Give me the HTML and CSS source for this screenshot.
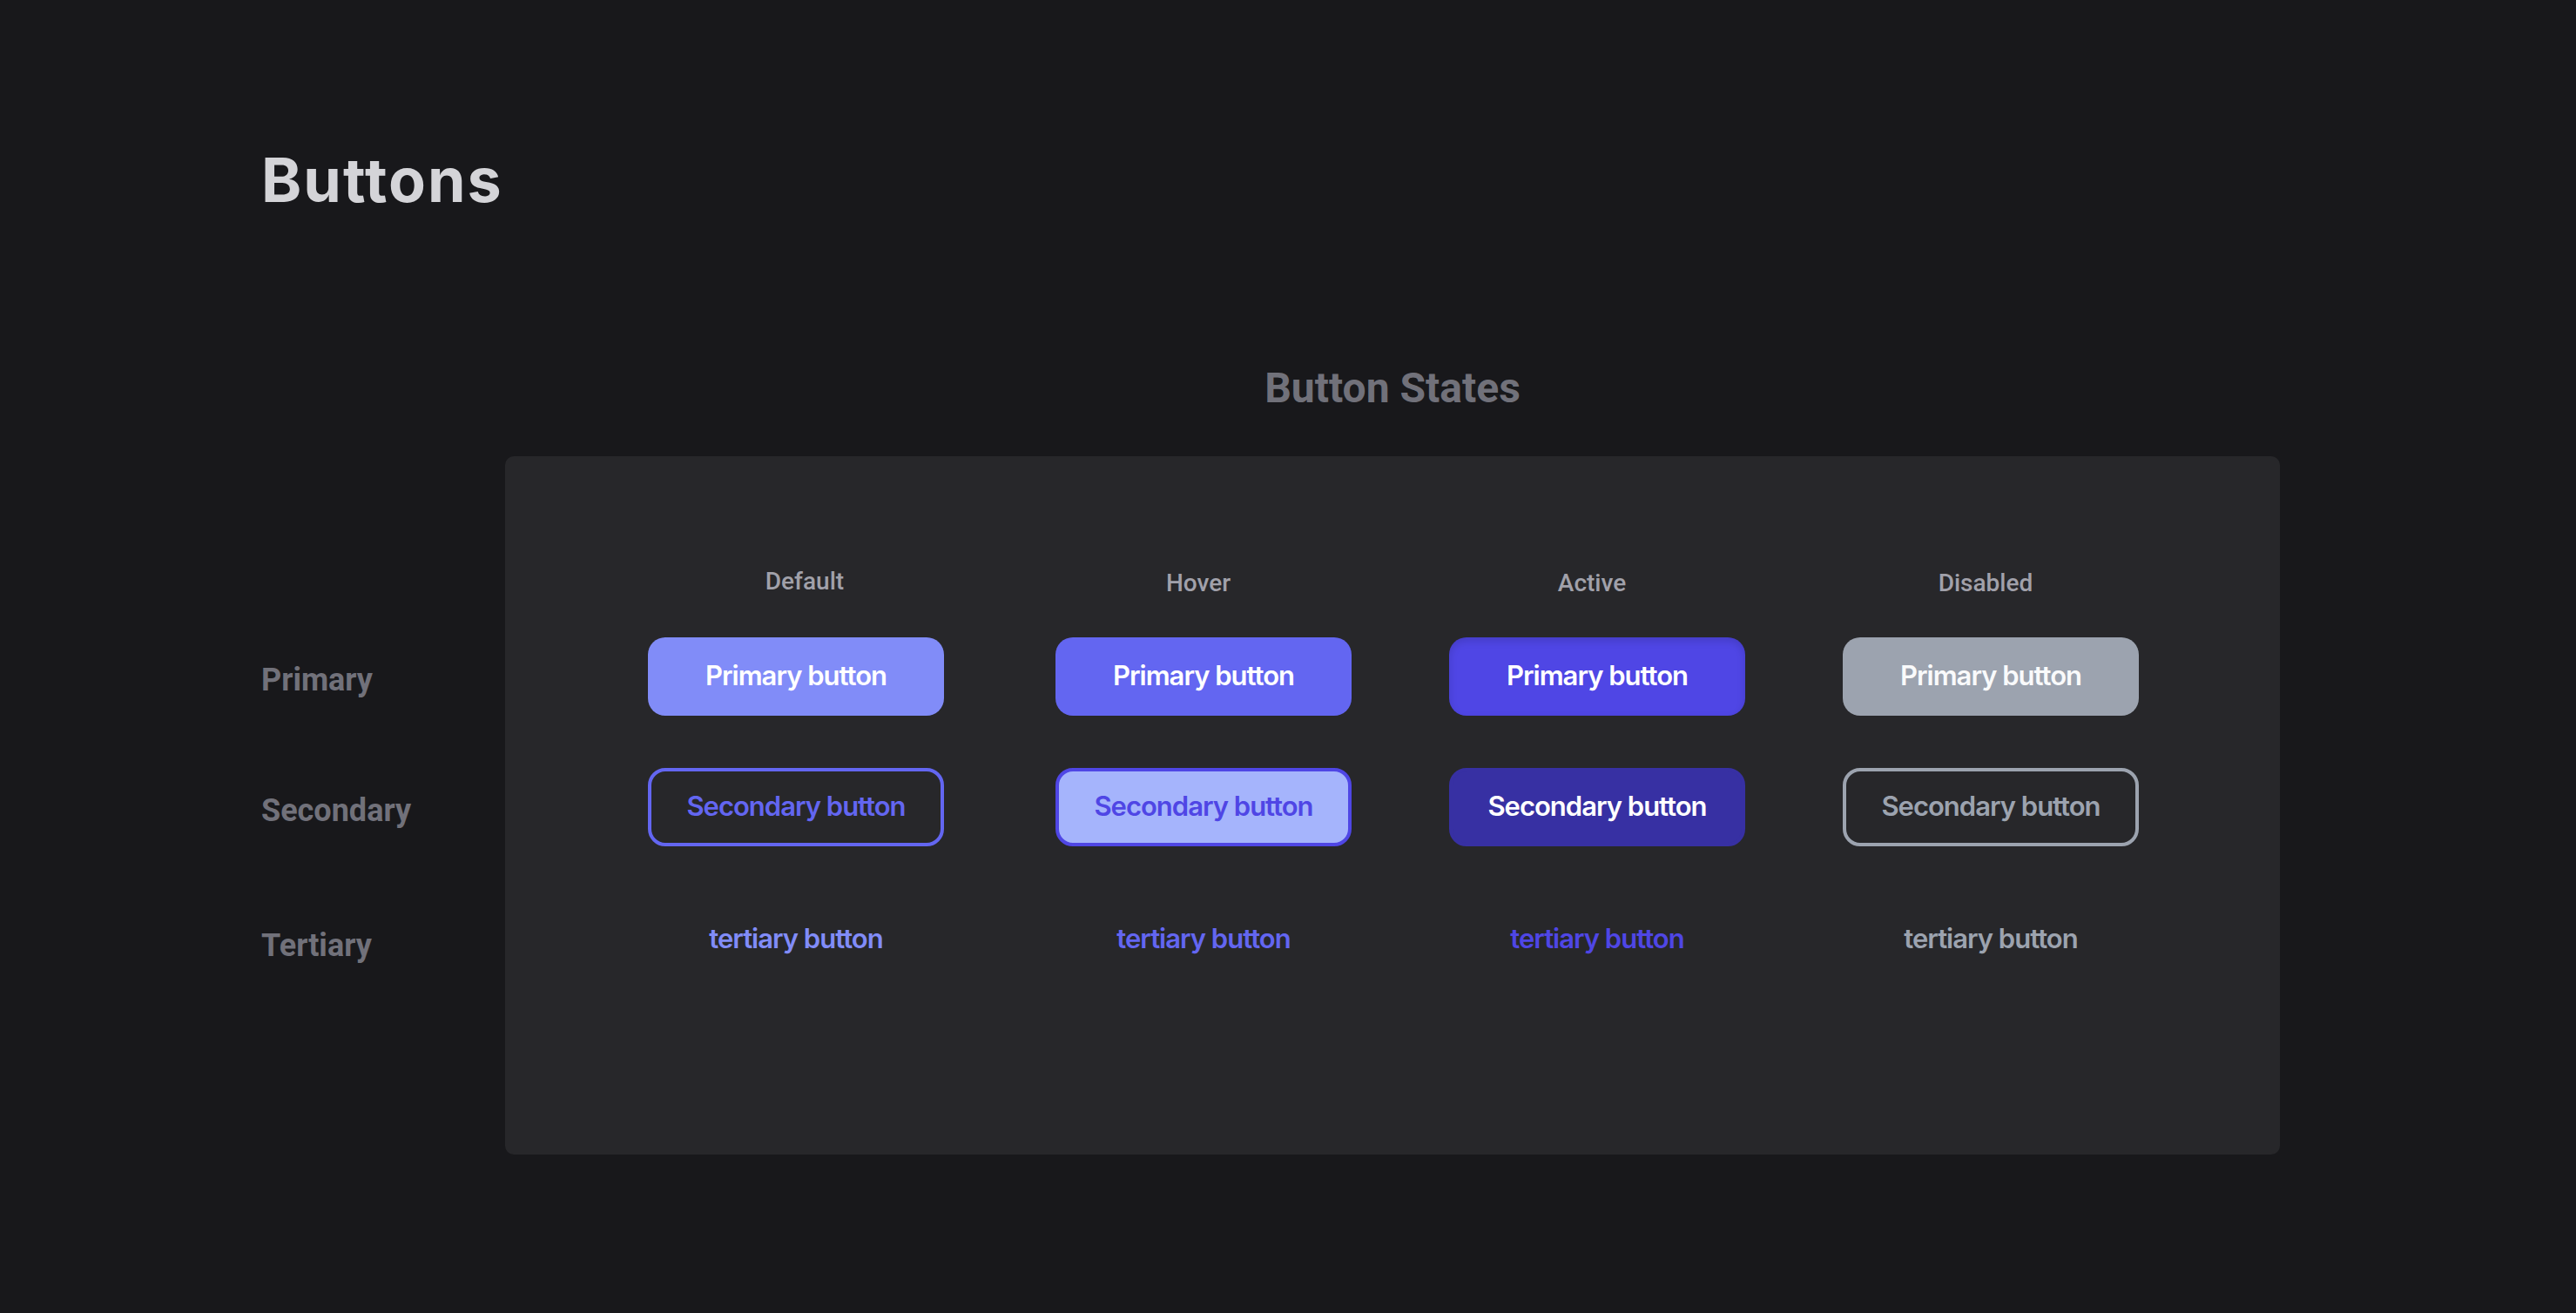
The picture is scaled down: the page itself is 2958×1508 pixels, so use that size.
FILE: index.html
```html
<!DOCTYPE html>
<html lang="en">
<head>
<meta charset="utf-8">
<title>Buttons</title>
<link rel="stylesheet" href="styles.css">
</head>
<body>
<main class="page">
  <h1 class="page-title">Buttons</h1>

  <section class="states">
    <h2 class="states-title">Button States</h2>

    <div class="row-labels">
      <div class="row-label">Primary</div>
      <div class="row-label">Secondary</div>
      <div class="row-label row-label--tertiary">Tertiary</div>
    </div>

    <div class="card">
      <div class="state-heads">
        <div class="state-head state-head--first">Default</div>
        <div class="state-head">Hover</div>
        <div class="state-head">Active</div>
        <div class="state-head">Disabled</div>
      </div>

      <div class="btn-grid">
        <button class="btn btn-primary">Primary button</button>
        <button class="btn btn-primary is-hover">Primary button</button>
        <button class="btn btn-primary is-active">Primary button</button>
        <button class="btn btn-primary is-disabled">Primary button</button>

        <button class="btn btn-secondary">Secondary button</button>
        <button class="btn btn-secondary is-hover">Secondary button</button>
        <button class="btn btn-secondary is-active">Secondary button</button>
        <button class="btn btn-secondary is-disabled">Secondary button</button>

        <button class="btn btn-tertiary">tertiary button</button>
        <button class="btn btn-tertiary is-hover">tertiary button</button>
        <button class="btn btn-tertiary is-active">tertiary button</button>
        <button class="btn btn-tertiary is-disabled">tertiary button</button>
      </div>
    </div>
  </section>
</main>
</body>
</html>
```

FILE: styles.css
```css
* { box-sizing: border-box; }

html, body {
  margin: 0;
  padding: 0;
  background: #18181b;
  min-height: 100%;
}

body {
  font-family: Inter, "Liberation Sans", sans-serif;
  color: #d4d4d8;
  min-height: 1508px;
}

.page {
  padding: 165px 0 0 300px;
}

.page-title {
  margin: 0;
  font-family: Inter, "Liberation Sans", sans-serif;
  font-weight: 700;
  font-size: 70px;
  line-height: 84px;
  color: #d4d4d8;
  letter-spacing: 2px;
}

.states {
  display: grid;
  grid-template-columns: 280px 2038px;
  grid-template-rows: auto auto;
  margin-top: 169px;
}

.states-title {
  grid-column: 2;
  grid-row: 1;
  margin: 0 0 50px;
  text-align: center;
  font-family: Roboto, "Liberation Sans", sans-serif;
  font-weight: 700;
  font-size: 48px;
  line-height: 56px;
  color: #71717a;
}

.row-labels {
  grid-column: 1;
  grid-row: 2;
  display: flex;
  flex-direction: column;
  gap: 60px;
  padding-top: 212px;
}

.row-label {
  height: 90px;
  display: flex;
  align-items: center;
  font-family: Roboto, "Liberation Sans", sans-serif;
  font-weight: 700;
  font-size: 36px;
  color: #71717a;
}

.row-label--tertiary {
  margin-top: 5px;
}

.card {
  grid-column: 2;
  grid-row: 2;
  background: #27272a;
  border-radius: 10px;
  height: 802px;
  padding: 130px 0 0 92px;
}

.state-heads {
  display: grid;
  grid-template-columns: repeat(4, 452px);
  margin-left: 26px;
}

.state-head {
  text-align: center;
  font-family: Roboto, "Liberation Sans", sans-serif;
  font-weight: 500;
  font-size: 28px;
  line-height: 32px;
  color: #a1a1aa;
}

.state-head--first {
  position: relative;
  top: -2px;
}

.btn-grid {
  display: grid;
  grid-template-columns: 484px 452px 452px 452px;
  grid-auto-rows: 90px;
  row-gap: 60px;
  justify-items: center;
  margin-top: 46px;
}

.btn {
  width: 340px;
  height: 90px;
  border: 0;
  border-radius: 20px;
  padding: 0 0 3px;
  display: flex;
  align-items: center;
  justify-content: center;
  font-family: Inter, "Liberation Sans", sans-serif;
  font-weight: 600;
  font-size: 31px;
  letter-spacing: -1px;
  line-height: 1;
  background: transparent;
  cursor: pointer;
}

/* Primary */
.btn-primary {
  background: #818cf8;
  color: #ffffff;
}
.btn-primary.is-hover {
  background: #6366f1;
}
.btn-primary.is-active {
  background: #4f46e5;
  box-shadow: inset 0 4px 10px rgba(0, 0, 0, 0.14);
}
.btn-primary.is-disabled {
  background: #9ca3af;
  color: #f9fafb;
}

/* Secondary */
.btn-secondary {
  border: 4px solid #6366f1;
  color: #6366f1;
}
.btn-secondary.is-hover {
  background: #a5b4fc;
  border-color: #4f46e5;
  color: #4f46e5;
}
.btn-secondary.is-active {
  background: #3730a3;
  border-color: #3730a3;
  color: #ffffff;
}
.btn-secondary.is-disabled {
  border-color: #9ca3af;
  color: #9ca3af;
}

/* Tertiary */
.btn-tertiary {
  margin-top: 2px;
  color: #818cf8;
}
.btn-tertiary.is-hover { color: #6366f1; }
.btn-tertiary.is-active { color: #4f46e5; }
.btn-tertiary.is-disabled { color: #9ca3af; }
```
